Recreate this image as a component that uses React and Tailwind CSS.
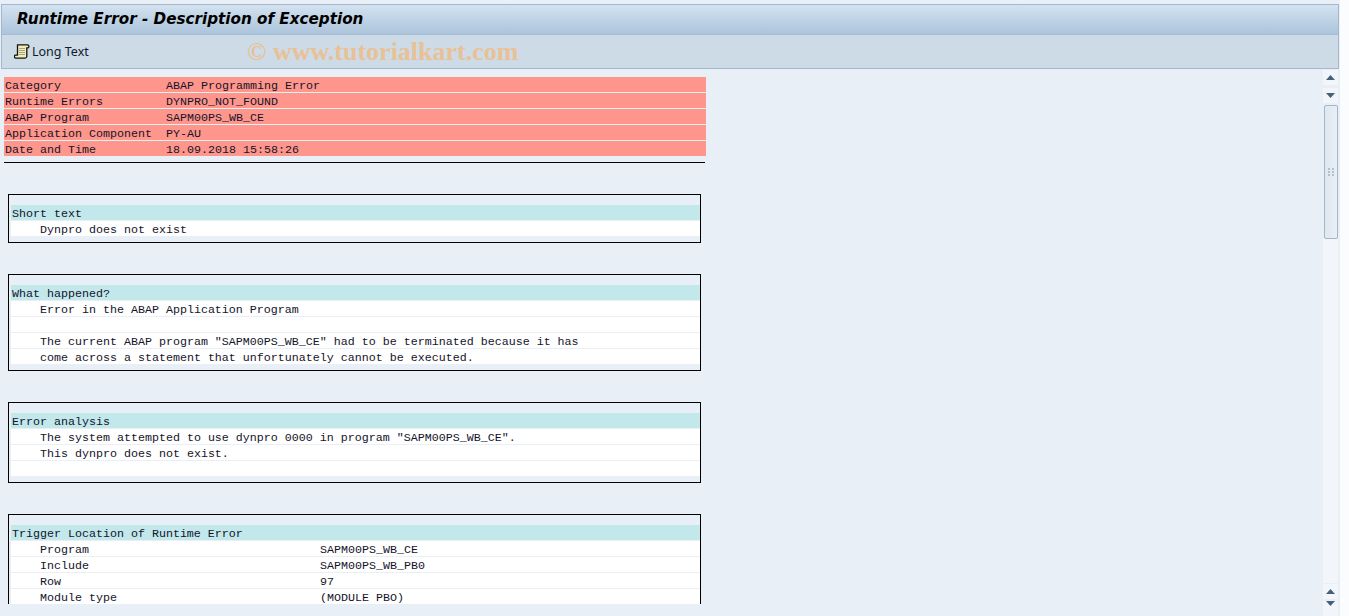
import React from 'react';

const infoRows = [
  ['Category', 'ABAP Programming Error'],
  ['Runtime Errors', 'DYNPRO_NOT_FOUND'],
  ['ABAP Program', 'SAPM00PS_WB_CE'],
  ['Application Component', 'PY-AU'],
  ['Date and Time', '18.09.2018 15:58:26'],
];

const sections = [
  { title: 'Short text', lines: ['Dynpro does not exist'] },
  {
    title: 'What happened?',
    lines: [
      'Error in the ABAP Application Program',
      '',
      'The current ABAP program "SAPM00PS_WB_CE" had to be terminated because it has',
      'come across a statement that unfortunately cannot be executed.',
    ],
  },
  {
    title: 'Error analysis',
    lines: [
      'The system attempted to use dynpro 0000 in program "SAPM00PS_WB_CE".',
      'This dynpro does not exist.',
      '',
    ],
  },
];

const triggerRows = [
  ['Program', 'SAPM00PS_WB_CE'],
  ['Include', 'SAPM00PS_WB_PB0'],
  ['Row', '97'],
  ['Module type', '(MODULE PBO)'],
];

const Row = ({ className = '', children }) => (
  <div className={`h-[15px] leading-[18px] whitespace-pre overflow-hidden ${className}`}>{children}</div>
);

const Section = ({ title, className = '', children }) => (
  <div className={`w-[693px] border border-black pt-[10px] pb-[6px] pl-[2px] flex flex-col gap-px ${className}`}>
    <Row className="bg-[#c2e8ec] pl-px">{title}</Row>
    {children}
  </div>
);

const ScrollIcon = () => (
  <svg width="16" height="15" viewBox="0 0 16 15" className="shrink-0">
    <path
      d="M3.5 .8H13.5a1.6 1.6 0 0 1 .6 3H12.8V11.5a2.2 2.2 0 0 1 -1.8 2.7H2a1.6 1.6 0 0 1 -.6 -3.1H3.5z"
      fill="#f1ecc0"
      stroke="#14140a"
      strokeWidth="1.3"
    />
    <path d="M5 4.5h6M5 6.5h6M5 8.5h6M5 10.5h6" stroke="#a9a678" strokeWidth="1" />
  </svg>
);

const ArrowUp = () => (
  <svg width="9" height="5" viewBox="0 0 9 5"><path d="M4.5 0L9 5H0z" fill="#456175" /></svg>
);

const ArrowDown = () => (
  <svg width="9" height="5" viewBox="0 0 9 5"><path d="M0 0h9L4.5 5z" fill="#456175" /></svg>
);

const ScrollButton = ({ className = '', children }) => (
  <div className={`h-[15px] bg-[#f2f5f9] flex items-center justify-center shrink-0 ${className}`}>{children}</div>
);

export default function App() {
  return (
    <div className="w-[1349px] h-[616px] overflow-hidden bg-[#fbfcfd] font-['Liberation_Mono',monospace]">
      <div className="w-[1340px] h-[616px] bg-[#e8eff7] pt-1 pl-px flex flex-col">
        {/* Title and toolbar */}
        <div className="w-[1338px] h-[65px] shrink-0 border border-[#a3b8cc] flex flex-col relative">
          <div className="h-[30px] bg-gradient-to-b from-[#d3e2ef] to-[#acc4dc] border-b border-[#a3bcd4] pl-[15px] flex items-center">
            <h1 className="text-[15.2px] font-bold italic text-black font-['DejaVu_Sans',sans-serif]">
              Runtime Error - Description of Exception
            </h1>
          </div>
          <div className="flex-1 bg-[#cddbe7] pl-[12px] flex items-center gap-[2px]">
            <ScrollIcon />
            <span className="text-[12.5px] pt-[2px] text-[#111a2e] font-['Noto_Sans',sans-serif]">Long Text</span>
          </div>
          <div className="absolute left-[245px] top-[31px] text-[26px] leading-[32px] font-bold text-[#e8c196] font-['Liberation_Serif',serif] whitespace-pre">
            © www.tutorialkart.com
          </div>
        </div>

        <div className="flex-1 min-h-0 flex">
          {/* Report area */}
          <div className="w-[1322px] h-[535px] overflow-hidden pl-[3px] pt-[8px] text-[11.67px] text-[#14142a]">
            <div className="w-[702px] flex flex-col gap-px">
              {infoRows.map(([label, value]) => (
                <Row key={label} className="bg-[#ff968c] pl-px flex">
                  <span className="w-[161px] shrink-0">{label}</span>
                  <span>{value}</span>
                </Row>
              ))}
            </div>
            <div className="w-[701px] h-px bg-black mt-[6px]" />

            <div className="ml-[4px] mt-[31px] flex flex-col gap-[31px]">
              {sections.map((section) => (
                <Section key={section.title} title={section.title}>
                  {section.lines.map((line, index) => (
                    <Row key={index} className="bg-white pl-[29px]">{line}</Row>
                  ))}
                </Section>
              ))}
              <Section title="Trigger Location of Runtime Error">
                {triggerRows.map(([label, value]) => (
                  <Row key={label} className="bg-white pl-[29px] flex">
                    <span className="w-[280px] shrink-0">{label}</span>
                    <span>{value}</span>
                  </Row>
                ))}
              </Section>
            </div>
          </div>

          {/* Vertical scrollbar */}
          <div className="w-[15px] h-[547px] flex flex-col pt-px">
            <ScrollButton><ArrowUp /></ScrollButton>
            <ScrollButton className="mt-[3px]"><ArrowDown /></ScrollButton>
            <div className="mt-[2px] ml-px h-[134px] shrink-0 rounded-[2px] border border-[#a5b6c6] bg-gradient-to-r from-[#dfe7ef] to-[#e8eff6] flex items-center justify-center">
              <div className="w-[6px] h-[8px] grid grid-cols-2 gap-x-[2px] gap-y-px">
                {[0, 1, 2, 3, 4, 5].map((dot) => (
                  <div key={dot} className="h-[2px] w-[2px] bg-[#b3c1cd]" />
                ))}
              </div>
            </div>
            <div className="flex-1 bg-[#f2f5f9]" />
            <ScrollButton className="mt-px"><ArrowUp /></ScrollButton>
            <ScrollButton className="mt-[2px] h-[7px] items-start"><ArrowDown /></ScrollButton>
          </div>
        </div>
      </div>
    </div>
  );
}
